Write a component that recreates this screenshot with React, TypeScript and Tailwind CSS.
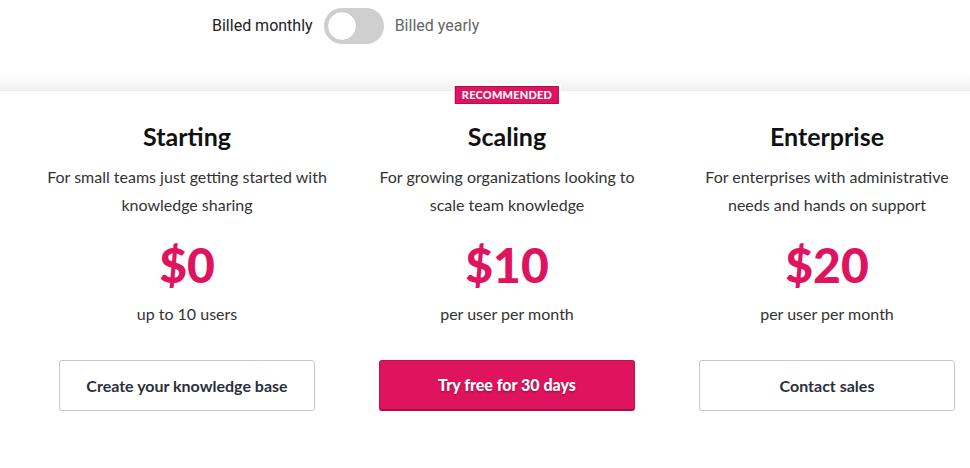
import React from "react";

interface Plan {
  name: string;
  description: string[];
  price: string;
  unit: string;
  cta: string;
  primary?: boolean;
}

const plans: Plan[] = [
  {
    name: "Starting",
    description: ["For small teams just getting started with", "knowledge sharing"],
    price: "$0",
    unit: "up to 10 users",
    cta: "Create your knowledge base",
  },
  {
    name: "Scaling",
    description: ["For growing organizations looking to", "scale team knowledge"],
    price: "$10",
    unit: "per user per month",
    cta: "Try free for 30 days",
    primary: true,
  },
  {
    name: "Enterprise",
    description: ["For enterprises with administrative", "needs and hands on support"],
    price: "$20",
    unit: "per user per month",
    cta: "Contact sales",
  },
];

function BillingToggle() {
  return (
    <div className="flex items-center h-[52px] pl-[212px] font-['Roboto',sans-serif] text-[16px]">
      <span className="text-[#222]">Billed monthly</span>
      <div className="ml-[11px] mr-[11px] w-[60px] h-[36px] rounded-full bg-[#cfcfcf] p-[3px] flex items-center">
        <div className="w-[30px] h-[30px] rounded-full bg-white border border-[#c4c4c4]" />
      </div>
      <span className="text-[#666]">Billed yearly</span>
    </div>
  );
}

function PlanColumn({ plan }: { plan: Plan }) {
  return (
    <div className="relative w-[320px] shrink-0 flex flex-col items-center pt-[30px]">
      {plan.primary && (
        <div className="absolute top-[-7px] left-1/2 -translate-x-1/2 bg-white p-[2px]">
          <div className="bg-[#e0135f] border border-[#b80d4c] text-white text-[11px] font-black tracking-[0.2px] leading-[16px] px-[6px]">
            RECOMMENDED
          </div>
        </div>
      )}
      <h2 className="text-[25px] font-bold text-[#111] leading-[30px]">{plan.name}</h2>
      <p className="mt-[12px] text-[16px] leading-[28px] text-[#333] text-center">
        {plan.description[0]}
        <br />
        {plan.description[1]}
      </p>
      <div className="mt-[17px] text-[48px] font-black text-[#e0135f] leading-[58px]">
        {plan.price}
      </div>
      <div className="mt-[8px] text-[16px] text-[#333] leading-[24px]">{plan.unit}</div>
      <button
        className={
          plan.primary
            ? "mt-[34px] w-[256px] h-[51px] rounded-[3px] bg-[#e0135f] border border-[#c20f52] border-b-[2px] border-b-[#a80c46] text-white text-[16px] font-black [text-shadow:0_1px_2px_rgba(0,0,0,0.35)]"
            : "mt-[34px] w-[256px] h-[51px] rounded-[3px] bg-white border border-[#c8c8c8] text-[#2a2f3a] text-[16px] font-bold"
        }
      >
        {plan.cta}
      </button>
    </div>
  );
}

export default function App() {
  return (
    <div className="w-[970px] h-[468px] overflow-hidden bg-white font-['Lato',sans-serif]">
      <BillingToggle />
      <div className="h-[38px] bg-[linear-gradient(to_bottom,#ffffff_55%,#f1f1f1)]" />
      <div className="border-t border-[#ececec] flex pl-[27px]">
        {plans.map((p) => (
          <PlanColumn key={p.name} plan={p} />
        ))}
      </div>
    </div>
  );
}
